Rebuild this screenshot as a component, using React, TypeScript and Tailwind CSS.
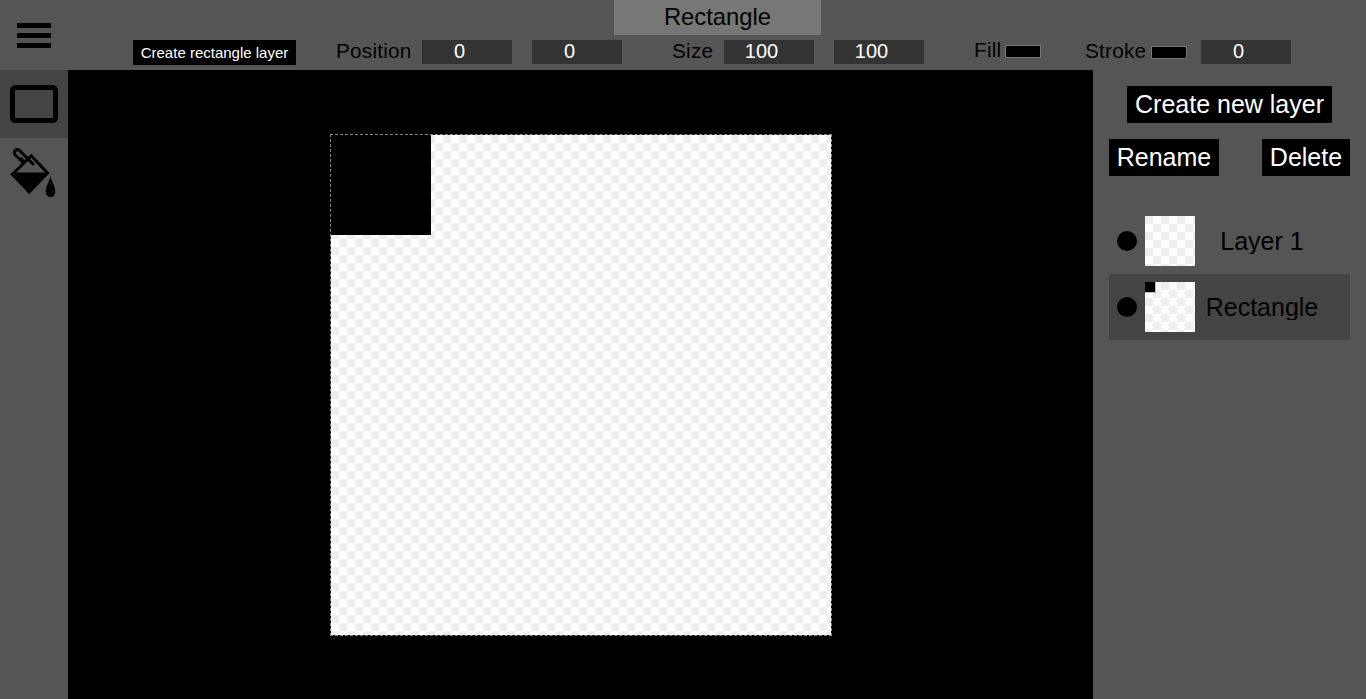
import React from "react";

const CHECKER =
  "bg-white bg-[conic-gradient(#fff_25%,#eee_0_50%,#fff_0_75%,#eee_0)] bg-[length:16px_16px]";

function NumberField({ value, className = "" }: { value: string; className?: string }) {
  return (
    <div
      className={`h-6 w-[90px] shrink-0 bg-[#333] pr-[15px] text-center text-[20px] leading-[22px] text-white ${className}`}
    >
      {value}
    </div>
  );
}

function Swatch({ className = "" }: { className?: string }) {
  return <div className={`h-[13px] w-9 shrink-0 border border-[#767676] bg-black ${className}`} />;
}

function Label({ children, className = "" }: { children: React.ReactNode; className?: string }) {
  return (
    <span className={`shrink-0 whitespace-nowrap text-[20.8px] leading-[22px] tracking-[0.2px] ${className}`}>
      {children}
    </span>
  );
}

function Button({ children, className = "" }: { children: React.ReactNode; className?: string }) {
  return (
    <button
      className={`h-[37px] whitespace-nowrap bg-black text-center text-[25px] leading-[37px] text-white ${className}`}
    >
      {children}
    </button>
  );
}

function Layer({ name, selected, filled }: { name: string; selected?: boolean; filled?: boolean }) {
  return (
    <div className={`flex h-[66px] items-center pl-2 pr-2 ${selected ? "bg-[#444]" : ""}`}>
      <div className="h-5 w-5 rounded-full bg-black" />
      <div className={`ml-2 h-[50px] w-[50px] ${CHECKER}`}>
        {filled && <div className="h-[11px] w-[11px] border-r border-b border-[#bbb] bg-black" />}
      </div>
      <div className="h-[26px] w-[134px] overflow-hidden text-center text-[25px] leading-[26px]">{name}</div>
    </div>
  );
}

export default function App() {
  return (
    <div className="flex h-[699px] w-[1366px] flex-col overflow-hidden bg-[#555] font-['Liberation_Sans',Arial,sans-serif] text-black">
      <header className="flex h-[70px] shrink-0">
        <div className="flex w-[68px] flex-col gap-[5px] pl-[17px] pt-[23px]">
          <div className="h-[5px] w-[34px] bg-black" />
          <div className="h-[5px] w-[34px] bg-black" />
          <div className="h-[5px] w-[34px] bg-black" />
        </div>
        <div className="flex flex-1 flex-col">
          <div className="ml-[546px] h-[35px] w-[207px] bg-[#777] text-center text-[23.8px] leading-[33px]">
            Rectangle
          </div>
          <div className="flex items-start pl-[65px] pt-[5px]">
            <button className="h-[25px] w-[163px] shrink-0 whitespace-nowrap bg-black text-[15px] leading-[25px] text-white">
              Create rectangle layer
            </button>
            <Label className="ml-10 w-[86px]">Position</Label>
            <NumberField value="0" />
            <NumberField value="0" className="ml-5" />
            <Label className="ml-[50px] w-[52px]">Size</Label>
            <NumberField value="100" />
            <NumberField value="100" className="ml-5" />
            <Label className="-mt-px ml-[50px] w-[31px]">Fill</Label>
            <Swatch className="mt-[5px]" />
            <Label className="ml-11 w-[66px]">Stroke</Label>
            <Swatch className="mt-[6px]" />
            <NumberField value="0" className="ml-[14px]" />
          </div>
        </div>
      </header>
      <div className="flex flex-1">
        <nav className="w-[68px] shrink-0">
          <div className="flex h-[68px] bg-[#444] pl-[10px] pt-[15px]">
            <svg width="48" height="38" viewBox="0 0 48 38">
              <rect x="2.5" y="2.5" width="43" height="33" rx="3" fill="none" stroke="#000" strokeWidth="5" />
            </svg>
          </div>
          <div className="pl-[10px] pt-[10px]">
            <svg width="48" height="50" viewBox="0 0 48 50" fill="none" stroke="#000">
              <path d="M21.3 7.8 L2.5 26.2 L19.2 43.5 L37.5 25 Z" strokeWidth="3" />
              <path d="M0.5 26.3 L2.5 24.5 L39.5 24.5 L19.2 46 Z" fill="#000" stroke="none" />
              <path
                d="M13.5 14.5 L5.2 7 C2.8 4.2 6 0.2 9.3 2.2 L23 16"
                strokeWidth="3"
                strokeLinecap="round"
                strokeLinejoin="round"
              />
              <path d="M10 10.5 L13.5 13.8" strokeWidth="4" />
              <path
                d="M40.5 28 C41.5 34 45.3 37.5 45.3 43.5 C45.3 51 35.7 51 35.7 43.5 C35.7 37.5 39.5 34 40.5 28Z"
                fill="#000"
                stroke="none"
              />
            </svg>
          </div>
        </nav>
        <main className="w-[1025px] shrink-0 bg-black pl-[262px] pt-16">
          <div className={`h-[502px] w-[502px] border border-dashed border-[#888] bg-clip-padding ${CHECKER}`}>
            <div className="h-[100px] w-[100px] bg-black" />
          </div>
        </main>
        <aside className="flex-1 px-4 pt-4">
          <div className="flex justify-center">
            <Button className="w-[205px]">Create new layer</Button>
          </div>
          <div className="mt-4 flex justify-between">
            <Button className="w-[110px]">Rename</Button>
            <Button className="w-[88px]">Delete</Button>
          </div>
          <div className="mt-8">
            <Layer name="Layer 1" />
            <Layer name="Rectangle" selected filled />
          </div>
        </aside>
      </div>
    </div>
  );
}
